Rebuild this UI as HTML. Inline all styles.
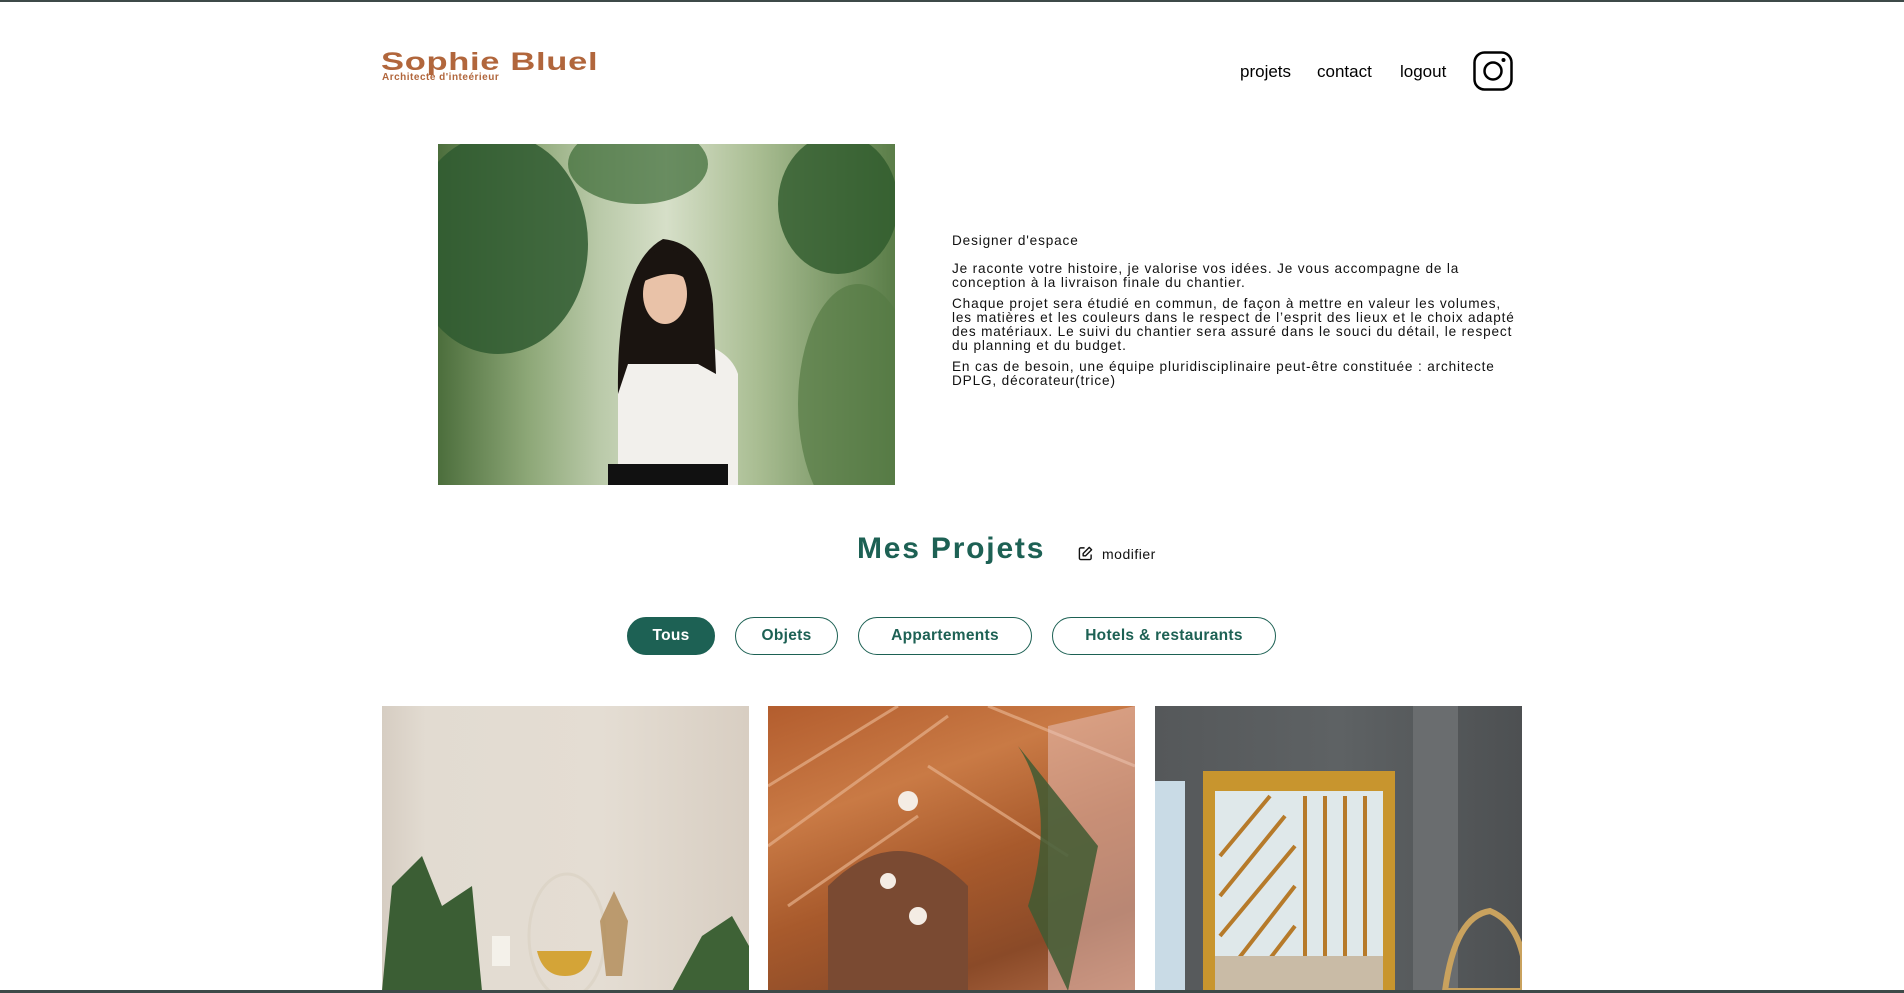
<!DOCTYPE html>
<html><head><meta charset="utf-8"><style>
*{margin:0;padding:0;box-sizing:border-box}
html,body{width:1904px;height:993px;overflow:hidden;background:#fff;font-family:"Liberation Sans",sans-serif}
.topline{position:absolute;left:0;top:0;width:1904px;height:2px;background:#3d4a48}
.botline{position:absolute;left:0;top:990px;width:1904px;height:3px;background:#3d4a48}
.logo{position:absolute;left:381px;top:48px;color:#B1663C;font-weight:bold;font-size:25px;letter-spacing:0.5px;transform:scaleX(1.38);transform-origin:left}
.sub{position:absolute;left:382px;top:72px;color:#B1663C;font-size:10px;font-weight:bold;letter-spacing:0.5px}
.nav{position:absolute;top:62px;font-size:17px;color:#000}
.insta{position:absolute;left:1473px;top:51px}
.photo{position:absolute;left:438px;top:144px;width:457px;height:341px;overflow:hidden;background:linear-gradient(90deg,#4c6e3c 0%,#8ea878 20%,#b9c9a8 35%,#d6dfc8 50%,#a9bd92 70%,#5a7d48 100%)}
.txt{position:absolute;left:952px;top:234px;font-size:13.6px;line-height:14px;color:#111;white-space:nowrap;letter-spacing:0.85px}
.txt p{margin-bottom:7px}
h2{position:absolute;left:857px;top:532px;font-size:30px;color:#1D6154;font-weight:bold;letter-spacing:1.8px}
.mod{position:absolute;left:1078px;top:546px;font-size:14px;color:#111;letter-spacing:0.5px}
.btn{position:absolute;top:617px;height:38px;border:1px solid #1D6154;border-radius:19px;color:#1D6154;font-weight:bold;font-size:15.5px;display:flex;align-items:center;justify-content:center;letter-spacing:0.3px}
.g{position:absolute;top:706px;height:285px;width:367px;overflow:hidden}
</style></head><body>
<div class="topline"></div>
<div class="logo">Sophie Bluel</div>
<div class="sub">Architecte d'inteérieur</div>
<div class="nav" style="left:1240px">projets</div>
<div class="nav" style="left:1317px">contact</div>
<div class="nav" style="left:1400px">logout</div>
<svg class="insta" width="40" height="40" viewBox="0 0 40 40"><rect x="1.5" y="1.5" width="37" height="37" rx="10" fill="none" stroke="#000" stroke-width="2.5"/><circle cx="20" cy="20" r="8.5" fill="none" stroke="#000" stroke-width="2.5"/><circle cx="30.5" cy="9" r="2" fill="#000"/></svg>

<div class="photo">
<svg width="457" height="341" viewBox="0 0 457 341">
<ellipse cx="60" cy="100" rx="90" ry="110" fill="#2f5a30" opacity=".85"/>
<ellipse cx="400" cy="60" rx="60" ry="70" fill="#2e5a2c" opacity=".8"/>
<ellipse cx="420" cy="260" rx="60" ry="120" fill="#557a45" opacity=".7"/>
<ellipse cx="200" cy="20" rx="70" ry="40" fill="#3a6a34" opacity=".7"/>
<path d="M180 341 L180 230 Q190 200 240 195 Q290 200 300 230 L300 341Z" fill="#f2f0ec"/>
<rect x="170" y="320" width="120" height="21" fill="#111"/>
<path d="M180 250 Q178 120 225 95 Q270 100 275 160 L278 230 L260 220 L190 220Z" fill="#1a1410"/>
<ellipse cx="227" cy="150" rx="22" ry="30" fill="#e9c2a8"/>
<path d="M200 140 Q205 105 230 105 Q255 110 252 140 Q240 120 200 140Z" fill="#1a1410"/>
</svg>
</div>

<div class="txt">
<p>Designer d'espace</p>
<p style="margin-top:14px">Je raconte votre histoire, je valorise vos idées. Je vous accompagne de la<br>conception à la livraison finale du chantier.</p>
<p>Chaque projet sera étudié en commun, de façon à mettre en valeur les volumes,<br>les matières et les couleurs dans le respect de l’esprit des lieux et le choix adapté<br>des matériaux. Le suivi du chantier sera assuré dans le souci du détail, le respect<br>du planning et du budget.</p>
<p>En cas de besoin, une équipe pluridisciplinaire peut-être constituée : architecte<br>DPLG, décorateur(trice)</p>
</div>

<h2>Mes Projets</h2>
<div class="mod"><svg width="15" height="15" viewBox="0 0 16 16" style="vertical-align:-2px;margin-right:9px"><path d="M7 2H3a1.5 1.5 0 0 0-1.5 1.5v9.5A1.5 1.5 0 0 0 3 14.5h9.5a1.5 1.5 0 0 0 1.5-1.5V9" fill="none" stroke="#111" stroke-width="1.5"/><path d="M12 1.5l2.5 2.5L8 10.5H5.5V8z" fill="none" stroke="#111" stroke-width="1.5" stroke-linejoin="round"/></svg>modifier</div>

<div class="btn" style="left:627px;width:88px;background:#1D6154;color:#fff">Tous</div>
<div class="btn" style="left:735px;width:103px">Objets</div>
<div class="btn" style="left:858px;width:174px">Appartements</div>
<div class="btn" style="left:1052px;width:224px">Hotels &amp; restaurants</div>

<div class="g" style="left:382px;background:linear-gradient(90deg,#d6cdc2 0%,#e2dbd1 12%,#e4ddd3 60%,#d8cec2 100%)">
<svg width="367" height="285"><ellipse cx="185" cy="230" rx="38" ry="62" fill="none" stroke="#ddd5c8" stroke-width="3"/><path d="M155 245 h55 q-5 25 -27 25 q-22 0 -28-25z" fill="#d4a437"/><path d="M0 285 L10 180 L40 150 L60 200 L90 180 L100 285Z" fill="#3b5e34"/><path d="M290 285 L320 230 L350 210 L367 240 L367 285Z" fill="#3e6236"/><rect x="110" y="230" width="18" height="30" fill="#f4f1ea"/><path d="M218 215 l14 -30 l14 30 l-6 55 h-16z" fill="#b08a55" opacity=".8"/></svg>
</div>
<div class="g" style="left:768px;background:linear-gradient(160deg,#b35d2e 0%,#c97a45 30%,#a85a2c 55%,#8a4a28 80%,#b06a45 100%)">
<svg width="367" height="285"><g stroke="#e6b08a" stroke-width="3" opacity=".7"><path d="M0 80 L130 0 M0 140 L180 10 M20 200 L150 110 M367 60 L220 0 M300 150 L160 60"/></g><path d="M60 285 L60 180 Q130 110 200 180 L200 285Z" fill="#7a4a32"/><path d="M280 20 L367 0 L367 285 L280 285Z" fill="#e8c3c0" opacity=".5"/><path d="M250 40 Q290 100 260 200 L300 285 L330 140Z" fill="#3f5a32" opacity=".85"/><circle cx="140" cy="95" r="10" fill="#f4ece4"/><circle cx="120" cy="175" r="8" fill="#f4ece4"/><circle cx="150" cy="210" r="9" fill="#f4ece4"/></svg>
</div>
<div class="g" style="left:1155px;background:linear-gradient(90deg,#55585a 0%,#5e6264 50%,#4d5052 100%)">
<svg width="368" height="285"><rect x="0" y="75" width="30" height="210" fill="#c9dbe6"/><rect x="48" y="65" width="192" height="220" fill="#c8952e"/><rect x="60" y="85" width="168" height="200" fill="#dfe8ea"/><g stroke="#b67a2a" stroke-width="4"><path d="M65 150 L115 90 M65 190 L130 110 M65 230 L140 140 M70 270 L140 180 M90 285 L140 220"/><path d="M150 90 V285 M170 90 V285 M190 90 V285 M210 90 V285"/></g><rect x="60" y="250" width="168" height="35" fill="#c9bba6"/><rect x="258" y="0" width="45" height="285" fill="#6a6d6f"/><path d="M290 285 Q300 210 335 205 Q360 215 368 250 L368 285Z" fill="none" stroke="#c9a25e" stroke-width="6"/></svg>
</div>
<div class="botline"></div>
</body></html>
